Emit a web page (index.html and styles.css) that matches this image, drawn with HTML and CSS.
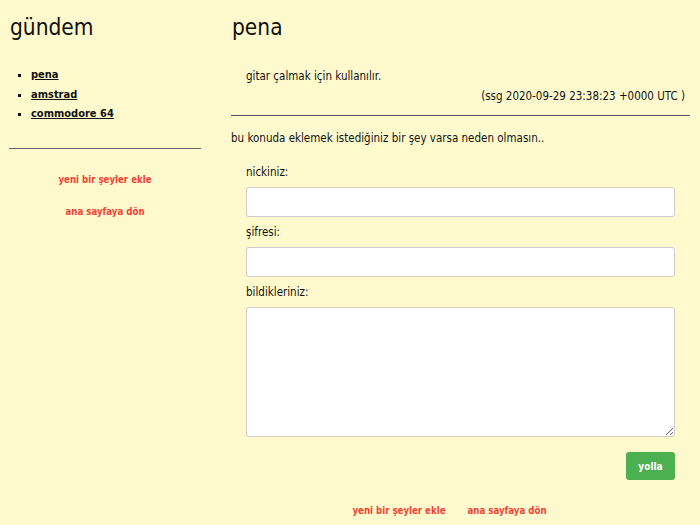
FILE: index.html
```html
<!DOCTYPE html>
<html lang="tr">
<head>
<meta charset="utf-8">
<title>pena</title>
<link rel="stylesheet" href="styles.css">
</head>
<body>
<div class="page">
  <aside class="side">
    <h1 class="title">gündem</h1>
    <ul class="topics">
      <li><a href="#">pena</a></li>
      <li><a href="#">amstrad</a></li>
      <li><a href="#">commodore 64</a></li>
    </ul>
    <hr class="rule">
    <div class="side-links">
      <a class="red" href="#">yeni bir şeyler ekle</a>
      <a class="red" href="#">ana sayfaya dön</a>
    </div>
  </aside>
  <main class="main">
    <h1 class="title">pena</h1>
    <p class="entry">gitar çalmak için kullanılır.</p>
    <p class="meta">(ssg 2020-09-29 23:38:23 +0000 UTC )</p>
    <hr class="rule">
    <p class="invite">bu konuda eklemek istediğiniz bir şey varsa neden olmasın..</p>
    <form class="form">
      <label class="lbl" for="nick">nickiniz:</label>
      <input class="field" id="nick" type="text">
      <label class="lbl" for="pw">şifresi:</label>
      <input class="field" id="pw" type="password">
      <label class="lbl" for="txt">bildikleriniz:</label>
      <textarea class="area" id="txt"></textarea>
      <div class="actions"><button class="btn" type="button">yolla</button></div>
    </form>
    <div class="bottom-links">
      <a class="red" href="#">yeni bir şeyler ekle</a>
      <a class="red" href="#">ana sayfaya dön</a>
    </div>
  </main>
</div>
</body>
</html>
```
FILE: styles.css
```css
html, body {
  margin: 0;
  padding: 0;
  background: #fffacd;
}
body {
  font-family: "DejaVu Sans Condensed", "DejaVu Sans", sans-serif;
  font-size: 11.5px;
  color: #111;
}
.page {
  display: flex;
  align-items: flex-start;
}
.side {
  width: 210px;
  padding: 0 9px;
  box-sizing: border-box;
}
.main {
  width: 459px;
  margin-left: 21px;
}
.title {
  font-size: 22.5px;
  font-weight: normal;
  margin: 13px 0 0 1px;
  line-height: 28px;
}
.topics {
  list-style: square;
  margin: 24px 0 0;
  padding-left: 22px;
}
.topics li {
  line-height: 19.5px;
  font-size: 11px;
  font-weight: bold;
}
.topics a {
  color: #111;
}
.rule {
  border: 0;
  border-top: 1px solid #666;
  margin: 0;
}
.side .rule {
  margin-top: 24px;
}
.side-links {
  display: flex;
  flex-direction: column;
  align-items: center;
  gap: 20px;
  padding-top: 25px;
}
.red {
  color: #f44336;
  font-weight: bold;
  font-size: 9.6px;
  line-height: 12px;
  text-decoration: none;
}
.entry {
  margin: 25px 0 0 15px;
  line-height: 20px;
}
.meta {
  margin: 0;
  text-align: right;
  padding-right: 5px;
  line-height: 20px;
}
.main .rule {
  margin-top: 9px;
  border-top-color: #556;
}
.invite {
  margin: 13px 0 0;
  line-height: 18px;
}
.form {
  display: flex;
  flex-direction: column;
  padding: 0 15px;
  margin-top: 18px;
}
.lbl {
  line-height: 15px;
  margin-bottom: 7px;
}
.field {
  height: 30px;
  box-sizing: border-box;
  border: 1px solid #ccc;
  border-radius: 3px;
  background: #fff;
  margin: 0 0 8px;
}
.area {
  height: 130px;
  box-sizing: border-box;
  border: 1px solid #ccc;
  border-radius: 3px;
  background: #fff;
  margin: 0;
  resize: vertical;
}
.actions {
  display: flex;
  justify-content: flex-end;
  margin-top: 15px;
}
.btn {
  background: #4caf50;
  color: #fff;
  border: 0;
  border-radius: 3px;
  width: 49px;
  height: 28px;
  font-family: "DejaVu Sans Condensed", "DejaVu Sans", sans-serif;
  font-size: 10px;
  font-weight: bold;
}
.bottom-links {
  display: flex;
  justify-content: center;
  gap: 22px;
  margin-top: 25px;
  padding-right: 22px;
}
```
